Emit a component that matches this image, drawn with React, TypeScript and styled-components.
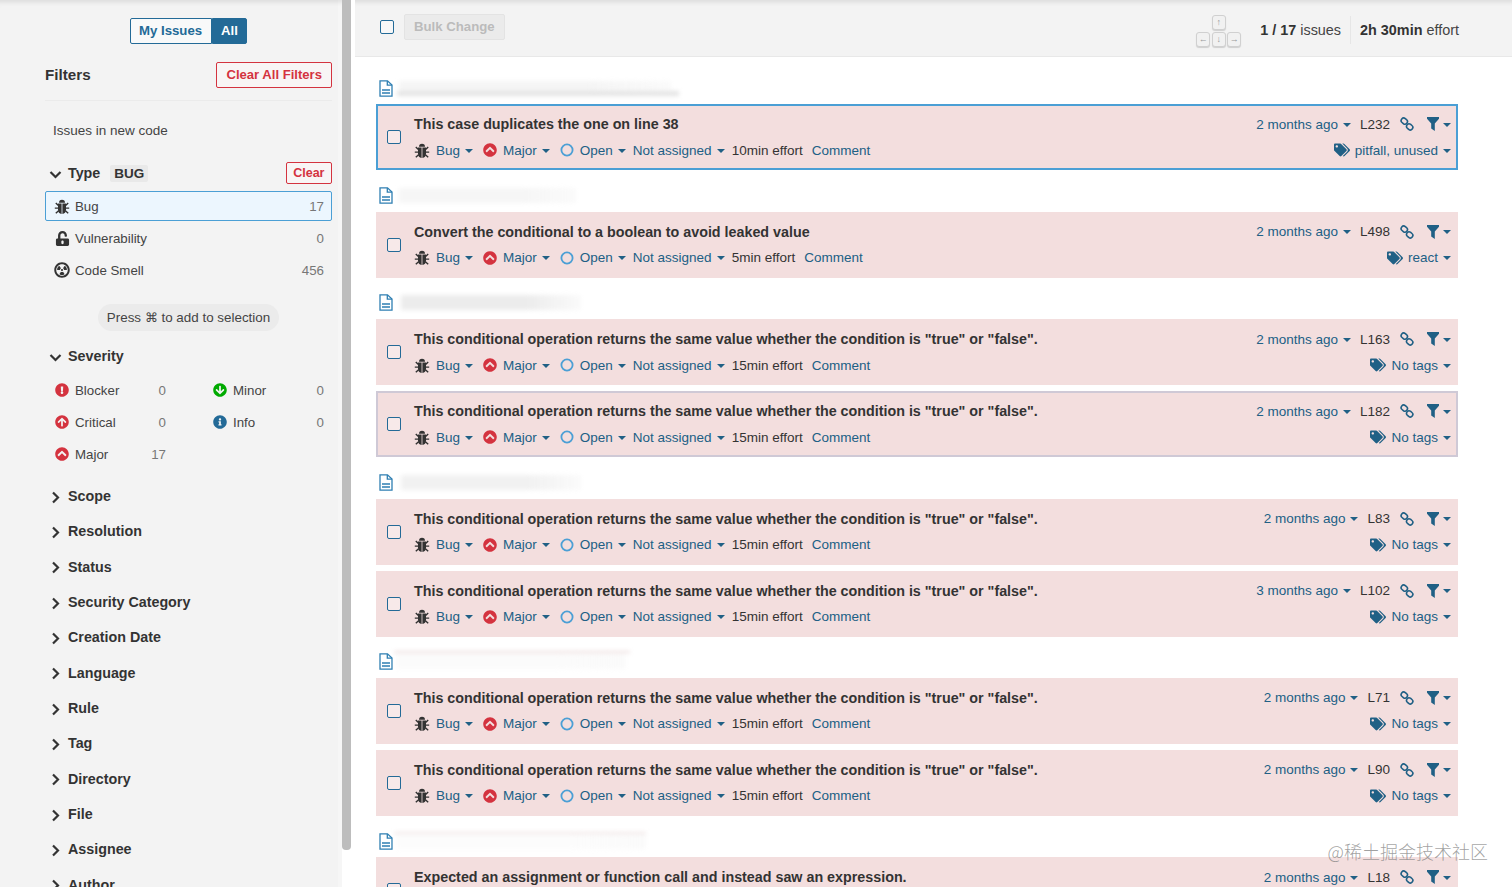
import React from "react";
import styled, { createGlobalStyle } from "styled-components";
import {
  FaArrowCircleDown,
  FaArrowCircleUp,
  FaChevronCircleUp,
  FaExclamationCircle,
  FaInfoCircle,
  FaRadiationAlt,
  FaTags,
  FaUnlockAlt,
} from "react-icons/fa";

const linkColor = "#206085";

const GlobalStyle = createGlobalStyle`
  html, body {
    margin: 0;
    height: 100%;
    overflow: hidden;
    background: #fff;
  }
  body {
    font-family: "Liberation Sans", Arial, sans-serif;
    font-size: 13.5px;
    color: #333;
  }
`;

const Page = styled.div`
  position: relative;
  display: flex;
  height: 887px;
  overflow: hidden;
`;

const Sidebar = styled.aside`
  box-sizing: border-box;
  width: 342px;
  flex: none;
  padding: 18px 10px 0 45px;
  background: #f3f3f3;
  box-shadow: inset 0 6px 5px -4px rgba(0, 0, 0, 0.1), inset -4px 0 0 #f6f6f6;
  overflow: hidden;
`;

const ScrollTrack = styled.div`
  width: 13px;
  flex: none;
  background: #fff;
`;

const ScrollThumb = styled.div`
  width: 9px;
  height: 850px;
  background: #bdbdbd;
  border-radius: 0 0 4px 4px;
`;

const ToggleRow = styled.div`
  display: flex;
  justify-content: center;
  margin-bottom: 18px;
`;

const ToggleButton = styled.div<{ $active?: boolean }>`
  box-sizing: border-box;
  height: 26px;
  padding: 0 8.5px;
  line-height: 24px;
  font-size: 13.2px;
  font-weight: 700;
  border: 1px solid #236a97;
  border-radius: ${(p) => (p.$active ? "0 2px 2px 0" : "2px 0 0 2px")};
  color: ${(p) => (p.$active ? "#fff" : "#236a97")};
  background: ${(p) => (p.$active ? "#236a97" : "#f8f9f9")};
`;

const FiltersHead = styled.div`
  display: flex;
  align-items: center;
  justify-content: space-between;
  height: 26px;
  padding-bottom: 12px;
  border-bottom: 1px solid #ebebeb;
`;

const FiltersTitle = styled.h2`
  margin: 0;
  font-size: 15.2px;
  line-height: 24px;
  font-weight: 700;
  color: #333;
`;

const DangerButton = styled.div<{ $small?: boolean }>`
  box-sizing: border-box;
  height: ${(p) => (p.$small ? "22px" : "26px")};
  padding: 0 ${(p) => (p.$small ? "6.5px" : "9px")};
  line-height: ${(p) => (p.$small ? "20px" : "24px")};
  font-size: ${(p) => (p.$small ? "12.5px" : "13.1px")};
  font-weight: 700;
  color: #d4333f;
  border: 1px solid #d4333f;
  border-radius: 2px;
  background: #f8f5f5;
`;

const NewCode = styled.div`
  margin: 21px 0 0 8px;
  font-size: 13.5px;
  line-height: 18px;
  color: #444;
`;

const FacetHead = styled.div<{ $gap?: number }>`
  display: flex;
  align-items: center;
  height: 22px;
  margin-top: ${(p) => p.$gap ?? 0}px;
  font-size: 14.3px;
  line-height: 20px;
  font-weight: 700;
  color: #333;
`;

const FacetChevron = styled.svg`
  width: 13px;
  height: 13px;
  margin: 2px 6px 0 4px;
  flex: none;
`;

const FacetValue = styled.span`
  margin-left: 10px;
  padding: 0 4px;
  height: 17px;
  line-height: 17px;
  font-size: 13.5px;
  background: #e9e9e9;
  border-radius: 2px;
`;

const PushRight = styled.span`
  margin-left: auto;
`;

const FacetOptions = styled.div`
  margin-top: 7px;
`;

const FacetItem = styled.div<{ $active?: boolean }>`
  box-sizing: border-box;
  display: flex;
  align-items: center;
  gap: 5px;
  height: 30px;
  margin-bottom: 2px;
  padding: 0 7px 0 8px;
  font-size: 13.3px;
  color: #444;
  border: 1px solid ${(p) => (p.$active ? "#4b9fd5" : "transparent")};
  border-radius: 2px;
  background: ${(p) => (p.$active ? "#ecf6fe" : "transparent")};
`;

const FacetIcon = styled.span<{ $color?: string }>`
  display: flex;
  justify-content: center;
  width: 16px;
  flex: none;
  color: ${(p) => p.$color ?? "#333"};
`;

const FacetCount = styled.span`
  margin-left: auto;
  color: #777;
`;

const Hint = styled.div`
  width: fit-content;
  margin: 19px auto 0;
  padding: 0 9px;
  height: 27px;
  line-height: 27px;
  font-size: 13.4px;
  color: #444;
  background: #ebebeb;
  border-radius: 14px;
`;

const SeverityGrid = styled.div`
  display: grid;
  grid-template-columns: 129px 129px;
  justify-content: space-between;
  margin-top: 8px;
`;

const CollapsedList = styled.div`
  display: flex;
  flex-direction: column;
  gap: 13.35px;
  margin-top: 14px;
`;

const Main = styled.main`
  flex: 1;
  min-width: 0;
`;

const TopBar = styled.div`
  box-sizing: border-box;
  display: flex;
  align-items: center;
  height: 57px;
  padding: 0 53px 3px 25px;
  background: #f3f3f3;
  border-bottom: 1px solid #e8e8e8;
  box-shadow: inset 0 6px 5px -4px rgba(0, 0, 0, 0.1);
`;

const Checkbox = styled.span`
  box-sizing: border-box;
  display: block;
  width: 14px;
  height: 14px;
  flex: none;
  border: 1px solid #236a97;
  border-radius: 2px;
  background: rgba(255, 255, 255, 0.35);
`;

const BulkButton = styled.div`
  box-sizing: border-box;
  height: 26px;
  margin-left: 10px;
  padding: 0 9px;
  line-height: 24px;
  font-size: 13.2px;
  font-weight: 700;
  color: #bbb;
  background: #ebebeb;
  border: 1px solid #e3e3e3;
  border-radius: 2px;
`;

const KeyGrid = styled.div`
  display: grid;
  grid-template-columns: repeat(3, 14px);
  gap: 2px 1.5px;
  margin: 9px 19px 0 auto;
`;

const Key = styled.span<{ $column?: number }>`
  box-sizing: border-box;
  grid-column: ${(p) => p.$column ?? "auto"};
  height: 15px;
  line-height: 13px;
  text-align: center;
  font-size: 9px;
  color: #999;
  background: #f1f1f1;
  border: 1px solid #d0d0d0;
  border-radius: 3px;
  box-shadow: 0 1px 1px rgba(0, 0, 0, 0.15);
`;

const PageStat = styled.div`
  margin-top: 6px;
  font-size: 14.4px;
  color: #444;
  & b {
    color: #333;
  }
`;

const StatDivider = styled.span`
  width: 1px;
  height: 28px;
  margin: 6px 9px 0;
  background: #e6e6e6;
`;

const IssueList = styled.div`
  padding: 12px 54px 0 21px;
`;

const GroupHead = styled.div`
  box-sizing: border-box;
  display: flex;
  align-items: center;
  height: 35.4px;
  padding: 3px 0 0 3px;
`;

const Smudge = styled.div<{ $width: number; $shade: string; $offset?: number }>`
  position: relative;
  width: ${(p) => p.$width}px;
  height: 15px;
  margin-left: ${(p) => p.$offset ?? 6}px;
  background: linear-gradient(90deg, ${(p) => p.$shade} 70%, rgba(240, 240, 240, 0.3));
  filter: blur(2px);
`;

const Streak = styled.span<{ $top: number; $width: number; $color: string }>`
  position: absolute;
  left: -2px;
  top: ${(p) => p.$top}px;
  width: ${(p) => p.$width}px;
  height: ${(p) => (p.$top < 0 ? 2 : 5)}px;
  background: ${(p) => p.$color};
`;

const Issue = styled.article<{ $state?: "selected" | "hover" }>`
  box-sizing: border-box;
  display: flex;
  align-items: center;
  height: 66px;
  margin-bottom: 6px;
  padding: 0 5px 0 9px;
  background: #f3dede;
  border: 2px solid
    ${(p) =>
      p.$state === "selected"
        ? "#4b9fd5"
        : p.$state === "hover"
          ? "#cfc9d6"
          : "#f3dede"};
`;

const IssueBody = styled.div`
  flex: 1;
  min-width: 0;
  margin-left: 13px;
  padding-top: 1px;
`;

const IssueLine = styled.div<{ $meta?: boolean }>`
  display: flex;
  align-items: center;
  justify-content: space-between;
  height: ${(p) => (p.$meta ? "26px" : "24px")};
  margin-top: ${(p) => (p.$meta ? "1px" : "0")};
`;

const IssueTitle = styled.div`
  font-weight: 700;
  font-size: 14.3px;
  color: #333;
`;

const Actions = styled.div`
  display: flex;
  align-items: center;
`;

const Action = styled.span<{ $gap?: number; $plain?: boolean }>`
  display: flex;
  align-items: center;
  margin-left: ${(p) => p.$gap ?? 0}px;
  color: ${(p) => (p.$plain ? "#333" : linkColor)};
  white-space: nowrap;
`;

const Caret = styled.span<{ $near?: boolean }>`
  width: 0;
  height: 0;
  margin-left: ${(p) => (p.$near ? 4 : 5)}px;
  margin-top: 1px;
  border-left: 4px solid transparent;
  border-right: 4px solid transparent;
  border-top: 4px solid ${linkColor};
`;

const TypeIcon = styled.span<{ $color?: string; $width?: number }>`
  display: flex;
  justify-content: center;
  width: ${(p) => p.$width ?? 16}px;
  margin-right: 6px;
  color: ${(p) => p.$color ?? "#333"};
`;

const TagIcon = styled(FaTags)`
  margin-right: 5px;
  color: ${linkColor};
  font-size: 16px;
`;

const Watermark = styled.div`
  position: absolute;
  right: 24px;
  top: 839px;
  font-family: "Noto Sans CJK SC", sans-serif;
  font-size: 18px;
  line-height: 24px;
  font-weight: 300;
  color: rgba(125, 125, 125, 0.72);
`;

const Chevron = ({ open }: { open?: boolean }) => (
  <FacetChevron viewBox="0 0 13 13" fill="none" stroke="#333" strokeWidth="2.2">
    <path d={open ? "M1.5 4l5 5 5-5" : "M4 1.5l5 5-5 5"} />
  </FacetChevron>
);

const BugIcon = () => (
  <svg width="17" height="17" viewBox="0 0 16 16" fill="currentColor">
    <path d="M5 4.2a3 3 0 0 1 6 0z" />
    <path d="M4 5h3.6v10.4A4 4 0 0 1 4 11.6zM8.4 5H12v6.6a4 4 0 0 1-3.6 3.8z" />
    <path
      d="M4.4 7L1.8 4.4M11.6 7l2.6-2.6M4.2 9.6H.8M11.8 9.6h3.4M4.6 12.2l-2.8 2.6M11.4 12.2l2.8 2.6"
      stroke="currentColor"
      strokeWidth="1.4"
      fill="none"
    />
  </svg>
);

const FileIcon = () => (
  <svg width="14" height="17" viewBox="0 0 14 17" fill="none" stroke="#2f7fb2" strokeWidth="1.3">
    <path d="M1 .8h7.5L13 5v11.2H1z" />
    <path d="M8.3 1v4.2H13M3 10h8M3 13h8" />
  </svg>
);

const LinkIcon = () => (
  <svg width="14" height="14" viewBox="0 0 14 14" fill="none" stroke={linkColor} strokeWidth="1.6">
    <rect x="1" y="1.6" width="6.6" height="5" rx="2.5" transform="rotate(40 4.3 4.1)" />
    <rect x="6.4" y="7.4" width="6.6" height="5" rx="2.5" transform="rotate(40 9.7 9.9)" />
  </svg>
);

const FunnelIcon = () => (
  <svg width="12" height="14" viewBox="0 0 12 14" fill={linkColor}>
    <path d="M0 0h12v1.8L7.8 6.6V14L4.2 11.6V6.6L0 1.8z" />
  </svg>
);

const OpenIcon = () => (
  <svg width="14" height="14" viewBox="0 0 14 14" fill="none" stroke="#4b9fd5" strokeWidth="1.8">
    <circle cx="7" cy="7" r="5.6" />
  </svg>
);

type IssueData = {
  title: string;
  effort: string;
  age: string;
  line: string;
  tags: string;
  state?: "selected" | "hover";
};

const noValue = 'This conditional operation returns the same value whether the condition is "true" or "false".';

const same = (age: string, line: string, state?: "hover"): IssueData => ({
  title: noValue,
  effort: "15min effort",
  age,
  line,
  tags: "No tags",
  state,
});

type GroupData = {
  smudge: number;
  shade: string;
  offset?: number;
  streak?: { top: number; width: number; color: string };
  issues: IssueData[];
};

const groups: GroupData[] = [
  {
    smudge: 272,
    shade: "#f5f5f5",
    streak: { top: 10, width: 282, color: "#e4e4e4" },
    issues: [
      {
        title: "This case duplicates the one on line 38",
        effort: "10min effort",
        age: "2 months ago",
        line: "L232",
        tags: "pitfall, unused",
        state: "selected",
      },
    ],
  },
  {
    smudge: 177,
    shade: "#f6f6f6",
    issues: [
      {
        title: "Convert the conditional to a boolean to avoid leaked value",
        effort: "5min effort",
        age: "2 months ago",
        line: "L498",
        tags: "react",
      },
    ],
  },
  {
    smudge: 180,
    shade: "#ececec",
    offset: 8,
    issues: [same("2 months ago", "L163"), same("2 months ago", "L182", "hover")],
  },
  {
    smudge: 180,
    shade: "#f1f1f1",
    offset: 8,
    issues: [same("2 months ago", "L83"), same("3 months ago", "L102")],
  },
  {
    smudge: 230,
    shade: "#fbfbfb",
    offset: 3,
    streak: { top: -3, width: 236, color: "#ecdcdc" },
    issues: [same("2 months ago", "L71"), same("2 months ago", "L90")],
  },
  {
    smudge: 250,
    shade: "#fcfcfc",
    offset: 3,
    streak: { top: -2, width: 252, color: "#f0e4e4" },
    issues: [
      {
        title: "Expected an assignment or function call and instead saw an expression.",
        effort: "5min effort",
        age: "2 months ago",
        line: "L18",
        tags: "No tags",
      },
    ],
  },
];

const collapsed = [
  "Scope",
  "Resolution",
  "Status",
  "Security Category",
  "Creation Date",
  "Language",
  "Rule",
  "Tag",
  "Directory",
  "File",
  "Assignee",
  "Author",
];

const IssueRow = ({ issue }: { issue: IssueData }) => (
  <Issue $state={issue.state}>
    <Checkbox />
    <IssueBody>
      <IssueLine>
        <IssueTitle>{issue.title}</IssueTitle>
        <Actions>
          <Action>
            {issue.age}
            <Caret />
          </Action>
          <Action $gap={9} $plain>
            {issue.line}
          </Action>
          <Action $gap={10}>
            <LinkIcon />
          </Action>
          <Action $gap={13}>
            <FunnelIcon />
            <Caret $near />
          </Action>
        </Actions>
      </IssueLine>
      <IssueLine $meta>
        <Actions>
          <TypeIcon $width={16}>
            <BugIcon />
          </TypeIcon>
          <Action>
            Bug
            <Caret />
          </Action>
          <Action $gap={10}>
            <TypeIcon $color="#d4333f" $width={14}>
              <FaChevronCircleUp size={14} />
            </TypeIcon>
            Major
            <Caret />
          </Action>
          <Action $gap={10}>
            <TypeIcon $width={14}>
              <OpenIcon />
            </TypeIcon>
            Open
            <Caret />
          </Action>
          <Action $gap={7}>
            Not assigned
            <Caret />
          </Action>
          <Action $gap={7} $plain>
            {issue.effort}
          </Action>
          <Action $gap={9}>Comment</Action>
        </Actions>
        <Action>
          <TagIcon />
          {issue.tags}
          <Caret />
        </Action>
      </IssueLine>
    </IssueBody>
  </Issue>
);

const App = () => (
  <>
    <GlobalStyle />
    <Page>
      <Sidebar>
        <ToggleRow>
          <ToggleButton>My Issues</ToggleButton>
          <ToggleButton $active>All</ToggleButton>
        </ToggleRow>
        <FiltersHead>
          <FiltersTitle>Filters</FiltersTitle>
          <DangerButton>Clear All Filters</DangerButton>
        </FiltersHead>
        <NewCode>Issues in new code</NewCode>
        <FacetHead $gap={22}>
          <Chevron open />
          Type
          <FacetValue>BUG</FacetValue>
          <PushRight>
            <DangerButton $small>Clear</DangerButton>
          </PushRight>
        </FacetHead>
        <FacetOptions>
          <FacetItem $active>
            <FacetIcon>
              <BugIcon />
            </FacetIcon>
            Bug
            <FacetCount>17</FacetCount>
          </FacetItem>
          <FacetItem>
            <FacetIcon>
              <FaUnlockAlt size={15} />
            </FacetIcon>
            Vulnerability
            <FacetCount>0</FacetCount>
          </FacetItem>
          <FacetItem>
            <FacetIcon>
              <FaRadiationAlt size={16} />
            </FacetIcon>
            Code Smell
            <FacetCount>456</FacetCount>
          </FacetItem>
        </FacetOptions>
        <Hint>Press ⌘ to add to selection</Hint>
        <FacetHead $gap={14}>
          <Chevron open />
          Severity
        </FacetHead>
        <SeverityGrid>
          <FacetItem>
            <FacetIcon $color="#d4333f">
              <FaExclamationCircle size={14} />
            </FacetIcon>
            Blocker
            <FacetCount>0</FacetCount>
          </FacetItem>
          <FacetItem>
            <FacetIcon $color="#00aa00">
              <FaArrowCircleDown size={14} />
            </FacetIcon>
            Minor
            <FacetCount>0</FacetCount>
          </FacetItem>
          <FacetItem>
            <FacetIcon $color="#d4333f">
              <FaArrowCircleUp size={14} />
            </FacetIcon>
            Critical
            <FacetCount>0</FacetCount>
          </FacetItem>
          <FacetItem>
            <FacetIcon $color="#236a97">
              <FaInfoCircle size={14} />
            </FacetIcon>
            Info
            <FacetCount>0</FacetCount>
          </FacetItem>
          <FacetItem>
            <FacetIcon $color="#d4333f">
              <FaChevronCircleUp size={14} />
            </FacetIcon>
            Major
            <FacetCount>17</FacetCount>
          </FacetItem>
        </SeverityGrid>
        <CollapsedList>
          {collapsed.map((name) => (
            <FacetHead key={name}>
              <Chevron />
              {name}
            </FacetHead>
          ))}
        </CollapsedList>
      </Sidebar>
      <ScrollTrack>
        <ScrollThumb />
      </ScrollTrack>
      <Main>
        <TopBar>
          <Checkbox />
          <BulkButton>Bulk Change</BulkButton>
          <KeyGrid>
            <Key $column={2}>↑</Key>
            <Key $column={1}>←</Key>
            <Key>↓</Key>
            <Key>→</Key>
          </KeyGrid>
          <PageStat>
            <b>1 / 17</b> issues
          </PageStat>
          <StatDivider />
          <PageStat>
            <b>2h 30min</b> effort
          </PageStat>
        </TopBar>
        <IssueList>
          {groups.map((group, index) => (
            <section key={index}>
              <GroupHead>
                <FileIcon />
                <Smudge $width={group.smudge} $shade={group.shade} $offset={group.offset}>
                  {group.streak && (
                    <Streak
                      $top={group.streak.top}
                      $width={group.streak.width}
                      $color={group.streak.color}
                    />
                  )}
                </Smudge>
              </GroupHead>
              {group.issues.map((issue) => (
                <IssueRow key={issue.line} issue={issue} />
              ))}
            </section>
          ))}
        </IssueList>
      </Main>
      <Watermark>@稀土掘金技术社区</Watermark>
    </Page>
  </>
);

export default App;
